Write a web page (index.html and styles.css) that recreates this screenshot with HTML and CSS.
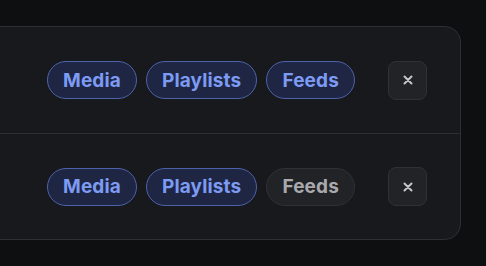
FILE: index.html
```html
<!DOCTYPE html>
<html>
<head>
<meta charset="utf-8">
<link rel="stylesheet" href="styles.css">
</head>
<body>
<div class="page">
  <div class="card">
    <div class="row">
      <div class="tags">
        <span class="tag on">Media</span>
        <span class="tag on">Playlists</span>
        <span class="tag on">Feeds</span>
      </div>
      <button class="close" aria-label="Remove">
        <svg width="12" height="12" viewBox="0 0 12 12"><path d="M2.5 2.5 L9.5 9.5 M9.5 2.5 L2.5 9.5" stroke="#c4c5c9" stroke-width="2" stroke-linecap="round"/></svg>
      </button>
    </div>
    <div class="row">
      <div class="tags">
        <span class="tag on">Media</span>
        <span class="tag on">Playlists</span>
        <span class="tag off">Feeds</span>
      </div>
      <button class="close" aria-label="Remove">
        <svg width="12" height="12" viewBox="0 0 12 12"><path d="M2.5 2.5 L9.5 9.5 M9.5 2.5 L2.5 9.5" stroke="#c4c5c9" stroke-width="2" stroke-linecap="round"/></svg>
      </button>
    </div>
  </div>
</div>
</body>
</html>
```
FILE: styles.css
```css
* { box-sizing: border-box; }
html, body { margin: 0; padding: 0; background: #0e0f11; }
body { width: 486px; height: 266px; overflow: hidden; font-family: Inter, "Noto Sans", sans-serif; }
.page { padding-top: 26px; }
.card {
  margin-left: -20px;
  width: 481px;
  background: #18191c;
  border: 1.5px solid #2d2f33;
  border-radius: 16px;
}
.row {
  height: 106px;
  display: flex;
  align-items: center;
  justify-content: flex-end;
  padding-right: 33px;
}
.row + .row { border-top: 1.5px solid #2d2f33; }
.tags { display: flex; gap: 9px; margin-right: 33px; }
.tag {
  height: 38px;
  display: inline-flex;
  align-items: center;
  padding: 0 15px;
  border-radius: 19px;
  font-size: 19px;
  font-weight: 700;
  letter-spacing: 0.15px;
}
.tag.on { background: #1e2644; border: 1.5px solid #4d62ab; color: #7d9bf3; }
.tag.off { background: #222327; border: 1.5px solid #303135; color: #a9aaae; }
.close {
  width: 39px; height: 39px;
  display: flex; align-items: center; justify-content: center;
  background: #222326;
  border: 1.5px solid #303135;
  border-radius: 8px;
  padding: 0;
}
.close svg { display: block; }
```
